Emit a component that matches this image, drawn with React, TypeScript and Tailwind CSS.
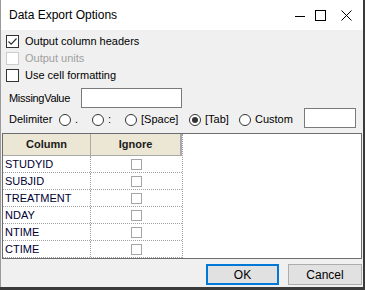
import { useState } from "react"

const font = { fontFamily: '"Liberation Sans", Arial, sans-serif' }

const Check = ({ checked, disabled }: { checked?: boolean; disabled?: boolean }) => (
  <div className={`w-[13px] h-[13px] border bg-white flex items-center justify-center ${disabled ? 'border-[#cccccc]' : 'border-[#333333]'}`}>
    {checked && (
      <svg width="11" height="11" viewBox="0 0 11 11">
        <path d="M1.5 5.5 L4.2 8.2 L9.5 2.5" stroke="#333" strokeWidth="1.2" fill="none" />
      </svg>
    )}
  </div>
)

const Radio = ({ checked }: { checked?: boolean }) => (
  <div className="w-[12px] h-[12px] rounded-full border border-[#333333] bg-white flex items-center justify-center shrink-0">
    {checked && <div className="w-[6px] h-[6px] rounded-full bg-[#333333]" />}
  </div>
)

const rows = ["STUDYID", "SUBJID", "TREATMENT", "NDAY", "NTIME", "CTIME"]

const App = () => {
  const [delim, setDelim] = useState("tab")

  const opts = [
    { id: "dot", label: ".", w: "w-[33px]" },
    { id: "colon", label: ":", w: "w-[33px]" },
    { id: "space", label: "[Space]", w: "w-[64px]" },
    { id: "tab", label: "[Tab]", w: "w-[50px]" },
    { id: "custom", label: "Custom", w: "w-[65px]" },
  ]

  return (
    <div className="w-[365px] h-[290px] bg-[#3a3a3a] text-[11px] text-black" style={font}>
      <div className="w-[363px] h-[287px] border-l border-[#9a9a9a] flex flex-col">
        {/* title bar */}
        <div className="h-[30px] bg-white flex items-center">
          <span className="ml-[8px] text-[12px] text-black">Data Export Options</span>
          <div className="ml-auto flex items-center h-full">
            <svg width="11" height="11" viewBox="0 0 11 11" className="mr-[9px]">
              <path d="M0 6.5 H10" stroke="#000" strokeWidth="1" />
            </svg>
            <svg width="11" height="11" viewBox="0 0 11 11" className="mr-[15px]">
              <rect x="0.5" y="0.5" width="10" height="10" stroke="#000" strokeWidth="1" fill="none" />
            </svg>
            <svg width="11" height="11" viewBox="0 0 11 11" className="mr-[11px]">
              <path d="M0.5 0.5 L10.5 10.5 M10.5 0.5 L0.5 10.5" stroke="#000" strokeWidth="1" />
            </svg>
          </div>
        </div>

        {/* body */}
        <div className="flex-1 bg-[#f0f0f0] flex flex-col pt-[3px]">
          <label className="h-[17px] flex items-center ml-[5px] gap-[6px]">
            <Check checked />
            <span>Output column headers</span>
          </label>
          <label className="h-[17px] flex items-center ml-[5px] gap-[6px] text-[#a0a0a0]">
            <Check disabled />
            <span>Output units</span>
          </label>
          <label className="h-[17px] flex items-center ml-[5px] gap-[6px]">
            <Check />
            <span>Use cell formatting</span>
          </label>

          <div className="flex items-center mt-[4px] h-[20px]">
            <span className="ml-[8px] w-[72px] tracking-[-0.3px]">MissingValue</span>
            <input className="w-[101px] h-[20px] border border-[#7a7a7a] bg-white outline-none px-1" />
          </div>

          <div className="flex items-center h-[20px]">
            <div className="flex items-center pt-[3px]">
              <span className="ml-[8px] w-[50px]">Delimiter</span>
              {opts.map((o) => (
                <div key={o.id} className={`flex items-center gap-[4px] cursor-default ${o.w}`} onClick={() => setDelim(o.id)}>
                  <Radio checked={delim === o.id} />
                  <span>{o.label}</span>
                </div>
              ))}
            </div>
            <input className="w-[52px] h-[20px] border border-[#7a7a7a] bg-white outline-none px-1" />
          </div>

          {/* grid */}
          <div className="mt-[5px] mx-[1px] h-[126px] border border-[#6d6d6d] bg-white flex">
            <div className="w-[180px] flex flex-col border-r border-dotted border-[#a0a0a0]">
              <div className="h-[23px] flex bg-[#ebe7d4] border-b border-[#a9a9a9] font-bold text-[#1a1a1a]">
                <div className="w-[88px] flex items-center justify-center border-r border-[#a9a9a9]">Column</div>
                <div className="flex-1 flex items-center justify-center border-r-2 border-[#a9a9a9]">Ignore</div>
              </div>
              {rows.map((r) => (
                <div key={r} className="h-[17px] flex border-b border-dotted border-[#a0a0a0]">
                  <div className="w-[88px] flex items-center pl-[2px] border-r border-dotted border-[#a0a0a0] text-[#000033]">{r}</div>
                  <div className="flex-1 flex items-center justify-center">
                    <div className="w-[11px] h-[11px] border border-[#a5a5a5] bg-white" />
                  </div>
                </div>
              ))}
            </div>
            <div className="flex-1" />
          </div>

          {/* buttons */}
          <div className="flex justify-end mt-[5px] mr-[1px] gap-[9px]">
            <button className="w-[73px] h-[21px] border-2 border-[#0078d7] bg-[#e1e1e1] text-[12px]">OK</button>
            <button className="w-[74px] h-[21px] border border-[#adadad] bg-[#e1e1e1] text-[12px]">Cancel</button>
          </div>
        </div>
      </div>
    </div>
  )
}

export default App
